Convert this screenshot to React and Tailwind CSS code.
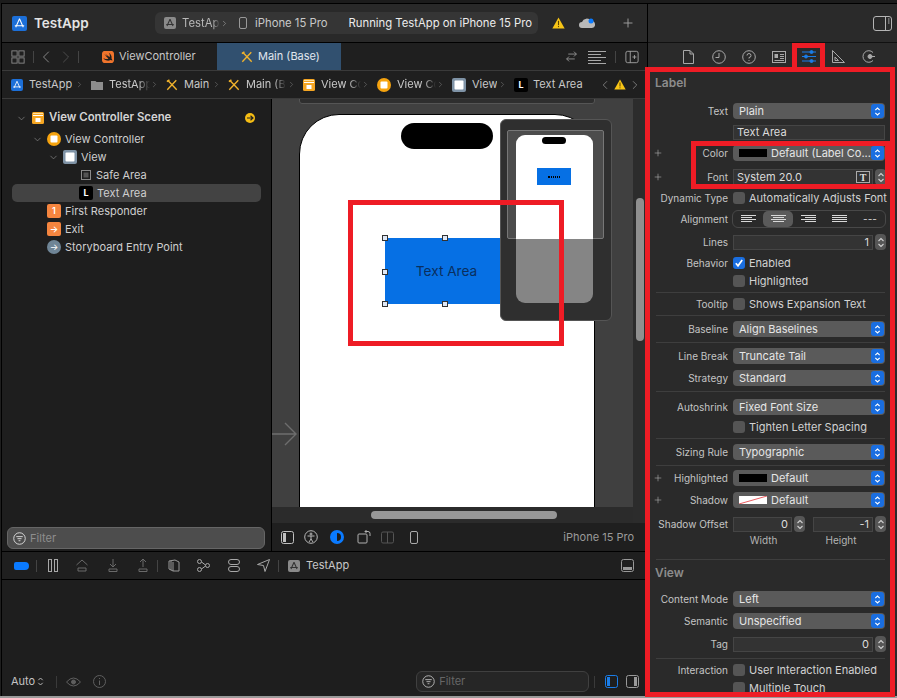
import React from "react";
import { SiSwift } from "react-icons/si";
import { ChevronRight, ChevronLeft, ChevronDown, Plus } from "lucide-react";

const AppIcon = ({ c = "bg-[#1c6fd8]", s = "w-[15px] h-[15px]" }) => (
  <span className={`${s} ${c} rounded-[2px] shrink-0 flex items-center justify-center`}>
    <svg viewBox="0 0 16 16" className="w-full h-full" fill="none" stroke="#fff" strokeWidth="1.1">
      <path d="M8 3 L4 12 M8 3 L12 12 M3 10.5 H13" />
    </svg>
  </span>
);
const GrayApp = () => (
  <span className="w-[12px] h-[12px] rounded-[2px] bg-[#8a8a8a] shrink-0 flex items-center justify-center">
    <svg viewBox="0 0 16 16" className="w-full h-full" fill="none" stroke="#333" strokeWidth="1.4">
      <path d="M8 3 L4 12 M8 3 L12 12 M3 10 H13" />
    </svg>
  </span>
);
const XIcon = () => (
  <svg viewBox="0 0 14 14" className="w-[12px] h-[12px] shrink-0" fill="none" stroke="#f1b32c" strokeWidth="1.6">
    <path d="M2 1.5 L12.5 12.5 M12 1.5 L1.5 12.5" />
    <path d="M1 3 L4 1" stroke="#f1b32c" />
  </svg>
);
const SceneIcon = ({ s = "w-[12px] h-[12px]" }) => (
  <svg viewBox="0 0 12 12" className={`${s} shrink-0`}>
    <rect width="12" height="12" rx="1.5" fill="#f5a623" />
    <rect x="1" y="1" width="10" height="1" fill="#ffe0a0" />
    <rect x="1" y="3" width="10" height="1" fill="#fff" />
    <rect x="3.5" y="6" width="5" height="4" fill="#fff" />
  </svg>
);
const VCIcon = ({ s = "w-[14px] h-[14px]" }) => (
  <svg viewBox="0 0 14 14" className={`${s} shrink-0`}>
    <circle cx="7" cy="7" r="7" fill="#f5a30f" />
    <rect x="3.5" y="3.5" width="7" height="7" rx="1" fill="#fff" />
  </svg>
);
const ViewIcon = () => (
  <svg viewBox="0 0 14 14" className="w-[14px] h-[14px] shrink-0">
    <rect width="14" height="14" rx="2" fill="#7f93a6" />
    <rect x="2.5" y="2.5" width="9" height="9" rx="1" fill="#fff" />
  </svg>
);
const LIcon = () => (
  <span className="w-[14px] h-[14px] rounded-[2px] bg-black text-white text-[9px] font-bold flex items-center justify-center shrink-0">L</span>
);
const Warn = ({ s = "w-[12px] h-[11px]" }) => (
  <svg viewBox="0 0 12 11" className={`${s} shrink-0`}>
    <path d="M6 0.5 L11.7 10.5 H0.3 Z" fill="#f8c516" strokeLinejoin="round" />
    <rect x="5.5" y="3.5" width="1" height="4" fill="#5a4300" />
    <rect x="5.5" y="8.3" width="1" height="1" fill="#5a4300" />
  </svg>
);
const ThinChev = () => <ChevronRight className="w-[9px] h-[11px] text-[#777] shrink-0" strokeWidth={1.5} />;

const IconSvg = ({ className = "", children, w = 16, h = 16 }) => (
  <svg viewBox={`0 0 ${w} ${h}`} className={`shrink-0 ${className}`} fill="none" stroke="currentColor" strokeWidth="1">
    {children}
  </svg>
);

const PathItem = ({ w, icon, text, fade, tw }) => (
  <div className={`flex items-center shrink-0 ${w}`}>
    {icon}
    <span className={`ml-[6px] whitespace-nowrap overflow-hidden ${tw} ${fade ? "[mask-image:linear-gradient(to_right,#000_70%,transparent)]" : ""}`}>{text}</span>
    <span className="ml-auto mr-[7px]"><ThinChev /></span>
  </div>
);

const Stepper = () => (
  <span className="w-[13px] h-[14px] mr-[1px] rounded-[3px] bg-[#1a6ee0] flex flex-col items-center justify-center shrink-0 text-white">
    <svg viewBox="0 0 8 12" className="w-[7px] h-[11px]" fill="none" stroke="currentColor" strokeWidth="1.3">
      <path d="M1.5 4.5 L4 2 L6.5 4.5 M1.5 7.5 L4 10 L6.5 7.5" />
    </svg>
  </span>
);
const Popup = ({ text, swatch, shadow }) => (
  <div className="w-[152px] h-[16px] rounded-[4px] bg-[#5a5a5a] flex items-center text-[#e6e6e6]">
    {swatch && <span className="ml-[6px] w-[28px] h-[8px] bg-black shrink-0" />}
    {shadow && (
      <svg viewBox="0 0 28 8" className="ml-[6px] w-[28px] h-[8px] shrink-0">
        <rect width="28" height="8" fill="#fff" />
        <path d="M0 8 L28 0" stroke="#e6333a" strokeWidth="0.8" />
      </svg>
    )}
    <span className={`flex-1 whitespace-nowrap ${swatch || shadow ? "ml-[4px]" : "ml-[6px]"}`}>{text}</span>
    <Stepper />
  </div>
);
const MiniStep = () => (
  <span className="w-[11px] h-[16px] rounded-[4px] bg-[#565656] flex items-center justify-center shrink-0 text-[#d0d0d0]">
    <svg viewBox="0 0 8 12" className="w-[8px] h-[13px]" fill="none" stroke="currentColor" strokeWidth="1.1">
      <path d="M1.5 4.5 L4 2 L6.5 4.5 M1.5 7.5 L4 10 L6.5 7.5" />
    </svg>
  </span>
);
const Field = ({ value, w = "w-[140px]", right }) => (
  <div className={`${w} h-[15px] bg-[#333333] border border-[#454545] flex items-center shrink-0 ${right ? "justify-end pr-[3px]" : "pl-[3px]"} text-[#dcdcdc]`}>{value}</div>
);
const Check = ({ on }) => (
  <span className={`w-[12px] h-[12px] rounded-[3px] shrink-0 flex items-center justify-center ${on ? "bg-[#1a6ee0]" : "bg-[#555555]"}`}>
    {on && (
      <svg viewBox="0 0 12 12" className="w-[12px] h-[12px]" fill="none" stroke="#fff" strokeWidth="1.7">
        <path d="M2.8 6.3 L5 8.8 L9.2 3" />
      </svg>
    )}
  </span>
);
const Row = ({ h, label, plus, children }) => (
  <div className={`flex items-center ${h}`}>
    <div className="w-[80px] pl-[5px] flex items-center justify-between shrink-0">
      {plus ? <Plus className="w-[10px] h-[10px] text-[#c0c0c0]" strokeWidth={1.3} /> : <span />}
      <span className="whitespace-nowrap text-[10px] text-[#c4c4c4]">{label}</span>
    </div>
    <div className="ml-[5px] flex items-center">{children}</div>
  </div>
);
const CheckRow = ({ h, label, text, on }) => (
  <Row h={h} label={label}>
    <Check on={on} />
    <span className="ml-[4px] whitespace-nowrap text-[#d2d2d2]">{text}</span>
  </Row>
);
const Div = ({ cls }) => <div className={`ml-[8px] w-[229px] h-px bg-[#3e3e3e] ${cls}`} />;

const AlignIcon = ({ kind }) => {
  const l = { l: [[0, 15], [0, 11], [0, 15], [0, 11]], c: [[0, 15], [2, 11], [0, 15], [2, 11]], r: [[0, 15], [4, 11], [0, 15], [4, 11]], j: [[0, 15], [0, 15], [0, 15], [0, 15]] }[kind];
  return (
    <svg viewBox="0 0 15 8" className="w-[15px] h-[8px]" stroke="#d8d8d8" strokeWidth="1">
      {l.map(([x, w], i) => <path key={i} d={`M${x} ${i * 2 + 0.5} h${w}`} />)}
    </svg>
  );
};

const Tree = ({ pl, icon, text, chev, sel }) => (
  <div className={`h-[18px] flex items-center rounded-[5px] mx-[10px] ${pl} ${sel ? "bg-[#434343]" : ""}`}>
    {chev && <ChevronDown className="w-[11px] h-[11px] text-[#8a8a8a] mr-[4px] -ml-[15px]" strokeWidth={1.5} />}
    {icon}
    <span className="ml-[4px] whitespace-nowrap text-[#cfcfcf]">{text}</span>
  </div>
);
const Orange = ({ children }) => (
  <span className="w-[14px] h-[14px] rounded-[2px] bg-[#f5853f] text-white text-[9px] font-semibold flex items-center justify-center shrink-0">{children}</span>
);
const FilterIcon = ({ c = "text-[#d8d8d8]" }) => (
  <IconSvg className={`w-[13px] h-[13px] ${c}`} w={14} h={14}>
    <circle cx="7" cy="7" r="6.2" />
    <path d="M3.5 5 H10.5 M4.8 7.2 H9.2 M6 9.4 H8" />
  </IconSvg>
);
const Handle = ({ cls }) => <span className={`absolute w-[6px] h-[6px] bg-[#dfe8f6] border border-[#333] ${cls}`} />;

export default function App() {
  return (
    <div className="relative w-[897px] h-[698px] overflow-hidden bg-[#1e1e1e] text-[11px] text-[#d0d0d0] [font-family:Inter,'Liberation_Sans',sans-serif]">
      <div className="h-[3px] bg-[#1c1c1c]" />
      <div className="h-[693px] ml-[1px] border-t border-black flex border-l border-l-black">
        {/* left column */}
        <div className="w-[646px] border-r border-black flex flex-col shrink-0">
          {/* toolbar */}
          <div className="h-[39px] bg-[#292929] border-b border-black flex items-center shrink-0">
            <span className="ml-[10px]"><AppIcon /></span>
            <span className="ml-[7px] w-[121px] shrink-0 text-[13.5px] font-semibold text-[#e4e4e4]">TestApp</span>
            <div className="w-[383px] h-[22px] rounded-[6px] bg-[#353535] flex items-center shrink-0 text-[11.3px]">
              <span className="ml-[9px]"><GrayApp /></span>
              <span className="ml-[6px] w-[38px] overflow-hidden whitespace-nowrap text-[#b8b8b8] [mask-image:linear-gradient(to_right,#000_80%,transparent)]">TestApp</span>
              <ChevronRight className="w-[9px] h-[11px] text-[#aaa]" strokeWidth={1.5} />
              <svg viewBox="0 0 8 12" className="ml-[10px] w-[8px] h-[12px] shrink-0" fill="none" stroke="#999" strokeWidth="1"><rect x="0.5" y="0.5" width="7" height="11" rx="1.5" /></svg>
              <span className="ml-[8px] whitespace-nowrap text-[#c8c8c8]">iPhone 15 Pro</span>
              <span className="ml-[21px] whitespace-nowrap text-[#ececec]">Running TestApp on iPhone 15 Pro</span>
            </div>
            <span className="ml-[14px]"><Warn s="w-[13px] h-[12px]" /></span>
            <span className="relative ml-[14px] w-[16px] h-[10px] shrink-0">
              <svg viewBox="0 0 16 10" className="w-[16px] h-[10px]"><path d="M3 10 a3 3 0 0 1 0 -6 a5 5 0 0 1 9 -1 a3.5 3.5 0 0 1 1 7 Z" fill="#b9b9b9" /><circle cx="12" cy="3" r="2.5" fill="#0a7aff" /></svg>
            </span>
            <Plus className="ml-[26px] w-[14px] h-[14px] text-[#a0a0a0]" strokeWidth={1.6} />
          </div>
          {/* tab bar */}
          <div className="h-[28px] bg-[#1f1f1f] flex items-center shrink-0 border-b border-[#3a3a3a] text-[#c8c8c8]">
            <IconSvg className="ml-[9px] w-[14px] h-[14px] text-[#8f8f8f]">
              <rect x="1" y="1" width="6" height="6" /><rect x="9" y="1" width="6" height="6" /><rect x="1" y="9" width="6" height="6" /><rect x="9" y="9" width="6" height="6" />
            </IconSvg>
            <span className="ml-[8px] w-px h-[12px] bg-[#444] shrink-0" />
            <ChevronLeft className="ml-[2px] w-[20px] h-[26px] text-[#999] shrink-0" strokeWidth={1} />
            <ChevronRight className="w-[20px] h-[26px] text-[#555] shrink-0" strokeWidth={1} />
            <span className="ml-[2px] w-px h-[12px] bg-[#444] shrink-0" />
            <div className="ml-[23px] w-[115px] flex items-center shrink-0">
              <SiSwift className="w-[12px] h-[12px] text-[#f0742c]" />
              <span className="ml-[5px] whitespace-nowrap">ViewController</span>
            </div>
            <div className="w-[124px] h-full bg-[#31506f] flex items-center pl-[24px] text-[#e0e6ee] shrink-0">
              <XIcon />
              <span className="ml-[5px] whitespace-nowrap">Main (Base)</span>
            </div>
            <IconSvg className="ml-[224px] w-[13px] h-[13px] text-[#a0a0a0]">
              <path d="M4 5 H14 M11 2 L14 5 L11 8 M12 11 H2 M5 8 L2 11 L5 14" />
            </IconSvg>
            <IconSvg className="ml-[10px] w-[18px] h-[14px] text-[#a8a8a8]" w={18} h={14}>
              <path d="M0 1.5 H18 M0 4.5 H13 M0 7.5 H18 M0 10.5 H13 M0 13.5 H18" />
            </IconSvg>
            <span className="ml-[9px] w-px h-[12px] bg-[#444] shrink-0" />
            <IconSvg className="ml-[9px] w-[14px] h-[14px] text-[#a8a8a8]">
              <rect x="1" y="1.5" width="14" height="13" rx="2" /><path d="M6 1.5 V14.5 M8.5 8 H13 M10.8 5.7 V10.3" />
            </IconSvg>
          </div>
          {/* path bar */}
          <div className="h-[28px] bg-[#1f1f1f] flex items-center shrink-0 border-b border-[#3a3a3a] pl-[9px] text-[#c8c8c8]">
            <PathItem w="w-[80px]" icon={<AppIcon s="w-[12px] h-[12px]" />} text="TestApp" />
            <PathItem w="w-[75px]" fade tw="w-[42px]" icon={<svg viewBox="0 0 12 10" className="w-[12px] h-[10px] shrink-0"><path d="M0 1 H4.5 L5.5 2 H12 V10 H0 Z" fill="#8d8d8d" /></svg>} text="TestApp" />
            <PathItem w="w-[62px]" icon={<XIcon />} text="Main" />
            <PathItem w="w-[75px]" fade tw="w-[40px]" icon={<XIcon />} text="Main (Base)" />
            <PathItem w="w-[74px]" fade tw="w-[40px]" icon={<SceneIcon />} text="View Controller" />
            <PathItem w="w-[75px]" fade tw="w-[39px]" icon={<VCIcon />} text="View Controller" />
            <PathItem w="w-[62px]" icon={<ViewIcon />} text="View" />
            <div className="flex items-center w-[70px] shrink-0">
              <LIcon />
              <span className="ml-[5px] whitespace-nowrap">Text Area</span>
            </div>
            <ChevronLeft className="ml-[14px] w-[14px] h-[18px] text-[#999] shrink-0" strokeWidth={1.2} />
            <span className="ml-[2px]"><Warn /></span>
            <ChevronRight className="ml-[2px] w-[14px] h-[18px] text-[#999] shrink-0" strokeWidth={1.2} />
          </div>
          {/* middle */}
          <div className="h-[453px] flex shrink-0 border-b border-black">
            {/* navigator */}
            <div className="w-[270px] bg-[#1e1e1e] border-r border-black flex flex-col shrink-0">
              <div className="h-[8px]" />
              <div className="h-[22px] flex items-center mx-[10px] pl-[22px]">
                <ChevronDown className="w-[11px] h-[11px] text-[#8a8a8a] mr-[5px] -ml-[18px]" strokeWidth={1.5} />
                <SceneIcon />
                <span className="ml-[5px] font-semibold text-[11.4px] text-[#d4d4d4] whitespace-nowrap">View Controller Scene</span>
                <span className="ml-auto mr-[6px] w-[10px] h-[10px] rounded-full bg-[#f5bd14] flex items-center justify-center">
                  <svg viewBox="0 0 10 10" className="w-[10px] h-[10px]" fill="none" stroke="#222" strokeWidth="1.2"><path d="M2 5 H8 M5.5 2.8 L8 5 L5.5 7.2" /></svg>
                </span>
              </div>
              <div className="h-[1px]" />
              <Tree pl="pl-[35px]" chev icon={<VCIcon />} text="View Controller" />
              <Tree pl="pl-[51px]" chev icon={<ViewIcon />} text="View" />
              <Tree pl="pl-[69px]" icon={<svg viewBox="0 0 10 10" className="w-[10px] h-[10px] shrink-0 mr-[1px]" fill="none" stroke="#8a8a8a"><rect x="0.5" y="0.5" width="9" height="9" /><rect x="2.5" y="2.5" width="5" height="5" fill="#555" stroke="none" /></svg>} text="Safe Area" />
              <Tree pl="pl-[67px]" sel icon={<LIcon />} text="Text Area" />
              <Tree pl="pl-[35px]" icon={<Orange>1</Orange>} text="First Responder" />
              <Tree pl="pl-[35px]" icon={<Orange>→</Orange>} text="Exit" />
              <Tree pl="pl-[35px]" icon={<span className="w-[14px] h-[14px] rounded-full bg-[#6f8596] text-white text-[9px] flex items-center justify-center shrink-0">→</span>} text="Storyboard Entry Point" />
              <div className="flex-1" />
              <div className="mx-[5px] mb-[2px] w-[258px] h-[22px] rounded-[6px] bg-[#4d4d4d] border border-[#666] flex items-center pl-[5px]">
                <FilterIcon c="text-[#e0e0e0]" />
                <span className="ml-[4px] text-[#8e8e8e]">Filter</span>
              </div>
            </div>
            {/* canvas column */}
            <div className="flex-1 flex flex-col">
              <div className="h-[424px] flex shrink-0">
                <div className="flex-1 flex flex-col">
                  <div className="relative h-[408px] overflow-hidden bg-[#404040] shrink-0">
                    <div className="absolute left-[27px] -top-[10px] w-[296px] h-[15px] bg-[#2e2e2e] border border-[#555] rounded-[3px]" />
                    <div className="absolute left-[27px] top-[15px] w-[296px] h-[430px] bg-white border border-black rounded-t-[40px]">
                      <div className="absolute left-[101px] top-[8px] w-[92px] h-[26px] rounded-full bg-black" />
                    </div>
                    <div className="absolute left-[113px] top-[139px] w-[130px] h-[66px] bg-[#0670e4] flex items-center justify-center">
                      <span className="ml-[-7px] text-[13.6px] text-[#0a2f5e]">Text Area</span>
                    </div>
                    <Handle cls="left-[110px] top-[136px]" />
                    <Handle cls="left-[170px] top-[136px]" />
                    <Handle cls="left-[110px] top-[170px]" />
                    <Handle cls="left-[110px] top-[202px]" />
                    <Handle cls="left-[170px] top-[202px]" />
                    <svg viewBox="0 0 26 26" className="absolute left-0 top-[322px] w-[26px] h-[26px]" fill="none" stroke="#6d6d6d" strokeWidth="1.4">
                      <path d="M0 13 H24 M13 2 L24 13 L13 24" />
                    </svg>
                    {/* minimap */}
                    <div className="absolute left-[228px] top-[20px] w-[112px] h-[202px] rounded-[6px] bg-[#2f2f2f] border border-[#555]">
                      <div className="absolute left-[6px] top-[10px] w-[97px] h-[109px] bg-[#4c4c4c] border border-[#777] rounded-[2px]" />
                      <div className="absolute left-[15px] top-[15px] w-[77px] h-[168px] rounded-[9px] overflow-hidden bg-[#858585]">
                        <div className="h-[104px] bg-white" />
                      </div>
                      <div className="absolute left-[41px] top-[17px] w-[24px] h-[7px] rounded-full bg-black" />
                      <div className="absolute left-[36px] top-[48px] w-[34px] h-[17px] bg-[#0670e4] flex items-center justify-center">
                        <span className="w-[12px] h-[2px] border-y border-dotted border-black" />
                      </div>
                    </div>
                  </div>
                  <div className="h-[16px] bg-[#2b2b2b] relative shrink-0">
                    <div className="absolute left-[99px] top-[4px] w-[186px] h-[8px] rounded-full bg-[#979797]" />
                  </div>
                </div>
                <div className="w-[14px] bg-[#2c2c2c] relative shrink-0">
                  <div className="absolute left-[3px] top-[99px] w-[8px] h-[143px] rounded-full bg-[#8f8f8f]" />
                </div>
              </div>
              <div className="flex-1 bg-[#1f1f1f] flex items-center pl-[9px] text-[#8a8a8a]">
                <IconSvg className="w-[13px] h-[13px] text-[#c0c0c0]" w={13} h={13}><rect x="0.5" y="0.5" width="12" height="12" rx="2" /><rect x="2" y="2" width="3" height="9" fill="currentColor" stroke="none" /></IconSvg>
                <IconSvg className="ml-[10px] w-[14px] h-[14px] text-[#b8b8b8]" w={14} h={14}><circle cx="7" cy="7" r="6.3" /><circle cx="7" cy="4" r="1" /><path d="M3.5 6 H10.5 M7 6 V9 L5 12 M7 9 L9 12" /></IconSvg>
                <svg viewBox="0 0 14 14" className="ml-[12px] w-[14px] h-[14px] shrink-0"><circle cx="7" cy="7" r="7" fill="#0a7aff" /><path d="M7 3 A4 4 0 0 1 7 11 Z" fill="#1c1c1c" /></svg>
                <IconSvg className="ml-[13px] w-[14px] h-[14px] text-[#b0b0b0]" w={14} h={14}><rect x="1" y="4" width="9" height="9" rx="1" /><path d="M8 1.5 H11 A2 2 0 0 1 13 3.5 V6 M9.5 0 L8 1.5 L9.5 3" /></IconSvg>
                <IconSvg className="ml-[10px] w-[13px] h-[13px] text-[#555]" w={13} h={13}><rect x="0.5" y="1" width="12" height="11" rx="1.5" /><path d="M6.5 1 V12" /></IconSvg>
                <IconSvg className="ml-[16px] w-[8px] h-[13px] text-[#aaa]" w={8} h={13}><rect x="0.5" y="0.5" width="7" height="12" rx="1.5" /></IconSvg>
                <span className="ml-auto mr-[13px] text-[#9a9a9a] whitespace-nowrap">iPhone 15 Pro</span>
              </div>
            </div>
          </div>
          {/* debug bar */}
          <div className="h-[28px] bg-[#1f1f1f] border-b border-black flex items-center shrink-0 text-[#888]">
            <span className="ml-[12px] w-[15px] h-[8px] bg-[#0a7aff] rounded-l-[2px] rounded-r-[4px] shrink-0" />
            <span className="ml-[7px] w-px h-[12px] bg-[#444] shrink-0" />
            <IconSvg className="ml-[11px] w-[10px] h-[13px] text-[#a8a8a8]" w={10} h={13}><rect x="0.5" y="0.5" width="3" height="12" /><rect x="6.5" y="0.5" width="3" height="12" /></IconSvg>
            <IconSvg className="ml-[18px] w-[12px] h-[13px] text-[#6a6a6a]" w={12} h={13}><path d="M0.5 6 L6 1 L11.5 6 M2 9 H10 V12 H2 Z" /></IconSvg>
            <IconSvg className="ml-[20px] w-[10px] h-[13px] text-[#6a6a6a]" w={10} h={13}><path d="M5 0 V8 M2 5 L5 8 L8 5 M1 10 H9 V12.5 H1 Z" /></IconSvg>
            <IconSvg className="ml-[20px] w-[10px] h-[13px] text-[#6a6a6a]" w={10} h={13}><path d="M5 8 V0 M2 3 L5 0 L8 3 M1 10 H9 V12.5 H1 Z" /></IconSvg>
            <span className="ml-[9px] w-px h-[12px] bg-[#444] shrink-0" />
            <IconSvg className="ml-[10px] w-[12px] h-[13px] text-[#999]" w={12} h={13}><path d="M1 2 L7 1 L11 3 V12 L5 12 L1 10 Z M5 3 V12 M3 2 V11" /></IconSvg>
            <IconSvg className="ml-[17px] w-[13px] h-[13px] text-[#a8a8a8]" w={13} h={13}><circle cx="2.5" cy="2.5" r="2" /><circle cx="2.5" cy="10.5" r="2" /><circle cx="10.5" cy="6.5" r="2" /><path d="M4.5 3 L8.5 6 M4.5 10 L8.5 7" /></IconSvg>
            <IconSvg className="ml-[18px] w-[12px] h-[13px] text-[#a8a8a8]" w={12} h={13}><rect x="0.5" y="0.5" width="11" height="5" rx="2.5" /><rect x="0.5" y="7.5" width="11" height="5" rx="2.5" /></IconSvg>
            <IconSvg className="ml-[17px] w-[13px] h-[13px] text-[#a8a8a8]" w={13} h={13}><path d="M12.5 0.5 L0.5 5.5 L6.5 6.5 L8 12.5 Z" /></IconSvg>
            <span className="ml-[8px] w-px h-[12px] bg-[#444] shrink-0" />
            <span className="ml-[9px]"><GrayApp /></span>
            <span className="ml-[6px] text-[#c8c8c8]">TestApp</span>
            <IconSvg className="ml-auto mr-[13px] w-[13px] h-[13px] text-[#999]" w={13} h={13}><rect x="0.5" y="0.5" width="12" height="12" rx="2" /><rect x="2" y="8" width="9" height="3" fill="currentColor" stroke="none" /></IconSvg>
          </div>
          {/* console */}
          <div className="flex-1 bg-[#1e1e1e] flex items-end pb-[4px]">
            <div className="h-[21px] flex items-center w-full">
              <span className="ml-[9px] text-[#c4c4c4]">Auto</span>
              <svg viewBox="0 0 8 12" className="ml-[2px] w-[7px] h-[11px]" fill="none" stroke="#bbb" strokeWidth="1.1"><path d="M1.5 4.5 L4 2 L6.5 4.5 M1.5 7.5 L4 10 L6.5 7.5" /></svg>
              <span className="ml-[12px] w-px h-[12px] bg-[#3a3a3a] shrink-0" />
              <IconSvg className="ml-[9px] w-[15px] h-[12px] text-[#5f5f5f]" w={15} h={12}><path d="M0.5 6 Q7.5 -2 14.5 6 Q7.5 14 0.5 6 Z" /><circle cx="7.5" cy="6" r="2" fill="currentColor" /></IconSvg>
              <IconSvg className="ml-[12px] w-[13px] h-[13px] text-[#5f5f5f]" w={13} h={13}><circle cx="6.5" cy="6.5" r="6" /><path d="M6.5 5.5 V10 M6.5 3 V4" /></IconSvg>
              <div className="ml-[310px] w-[173px] h-[21px] rounded-[6px] bg-[#262626] border border-[#404040] flex items-center pl-[5px] shrink-0">
                <FilterIcon c="text-[#bbb]" />
                <span className="ml-[4px] text-[#666]">Filter</span>
              </div>
              <span className="ml-[5px] w-px h-[12px] bg-[#3a3a3a] shrink-0" />
              <IconSvg className="ml-[10px] w-[13px] h-[13px] text-[#1a7de8]" w={13} h={13}><rect x="0.5" y="0.5" width="12" height="12" rx="2" /><rect x="2" y="2" width="3" height="9" fill="currentColor" stroke="none" /></IconSvg>
              <IconSvg className="ml-[8px] w-[13px] h-[13px] text-[#999]" w={13} h={13}><rect x="0.5" y="0.5" width="12" height="12" rx="2" /><rect x="8" y="2" width="3" height="9" fill="currentColor" stroke="none" /></IconSvg>
            </div>
          </div>
        </div>
        {/* inspector */}
        <div className="flex-1 min-w-0 bg-[#2a2a2a] flex flex-col overflow-hidden">
          <div className="h-[39px] border-b border-[#111] flex items-center justify-end shrink-0">
            <IconSvg className="mr-[5px] w-[19px] h-[15px] text-[#b5b5b5]" w={19} h={15}><rect x="0.5" y="0.5" width="18" height="14" rx="2.5" /><path d="M12.5 0.5 V14.5" /><path d="M15 3 H16.5 M15 5 H16.5 M15 7 H16.5" /></IconSvg>
          </div>
          <div className="h-[27px] flex items-center shrink-0 pl-[35px] text-[#a8a8a8]">
            <IconSvg className="w-[11px] h-[14px]" w={11} h={14}><path d="M0.5 0.5 H7 L10.5 4 V13.5 H0.5 Z M7 0.5 V4 H10.5" /></IconSvg>
            <IconSvg className="ml-[18px] w-[14px] h-[14px]" w={14} h={14}><circle cx="7" cy="7" r="6.3" /><path d="M7 3 V7.5 H3.5" /></IconSvg>
            <IconSvg className="ml-[16px] w-[14px] h-[14px]" w={14} h={14}><circle cx="7" cy="7" r="6.3" /><path d="M5 5.5 A2 2 0 1 1 7 7.5 V8.5 M7 10 V11" /></IconSvg>
            <IconSvg className="ml-[16px] w-[14px] h-[12px]" w={14} h={12}><rect x="0.5" y="0.5" width="13" height="11" /><rect x="2.5" y="3" width="3.5" height="4" fill="currentColor" stroke="none" /><path d="M8 3.5 H12 M8 5.5 H12 M8 7.5 H12 M2.5 9.5 H12" /></IconSvg>
            <IconSvg className="ml-[16px] w-[14px] h-[13px] text-[#1a7de8]" w={14} h={13}><path d="M0 2 H14 M0 6.5 H14 M0 11 H14" /><circle cx="9.5" cy="2" r="1.5" fill="currentColor" /><circle cx="4" cy="6.5" r="1.5" fill="currentColor" /><circle cx="9.5" cy="11" r="1.5" fill="currentColor" /></IconSvg>
            <IconSvg className="ml-[16px] w-[13px] h-[13px]" w={13} h={13}><path d="M0.5 0.5 L12.5 12.5 H0.5 Z M3 7 L6.5 10.5 H3 Z" /></IconSvg>
            <IconSvg className="ml-[17px] w-[13px] h-[13px]" w={13} h={13}><path d="M11 2.5 A5.8 5.8 0 1 0 11 10.5" /><circle cx="8" cy="6.5" r="2" fill="currentColor" /><path d="M8 6.5 H13" /></IconSvg>
          </div>
          <div className="flex-1 overflow-hidden">
            <div className="h-[2px]" />
            <div className="h-[22px] pl-[7px] flex items-center text-[12px] font-semibold text-[#8c8c8c]">Label</div>
            <div className="h-[6px]" />
            <Row h="h-[22px]" label="Text"><Popup text="Plain" /></Row>
            <div className="h-[20px] flex items-center pl-[85px]"><Field w="w-[152px]" value="Text Area" /></div>
            <Row h="h-[22px]" label="Color" plus><Popup swatch text="Default (Label Co..." /></Row>
            <Row h="h-[26px]" label="Font" plus>
              <div className="w-[140px] h-[16px] bg-[#333333] border border-[#454545] flex items-center pl-[3px] text-[#dcdcdc] shrink-0">
                <span className="flex-1">System 20.0</span>
                <span className="mr-[2px] w-[14px] h-[12px] border border-[#aaa] flex items-center justify-center text-[10px] font-bold [font-family:'Liberation_Serif',serif] text-[#ddd] shrink-0">T</span>
              </div>
              <span className="ml-[2px]"><MiniStep /></span>
            </Row>
            <CheckRow h="h-[16px]" label="Dynamic Type" text="Automatically Adjusts Font" />
            <Row h="h-[26px]" label="Alignment">
              <div className="w-[154px] -ml-[1px] h-[18px] rounded-[6px] border border-[#484848] flex items-center">
                <span className="w-[30px] flex justify-center"><AlignIcon kind="l" /></span>
                <span className="w-[30px] h-full bg-[#5a5a5a] rounded-[5px] flex items-center justify-center"><AlignIcon kind="c" /></span>
                <span className="w-[31px] flex justify-center"><AlignIcon kind="r" /></span>
                <span className="w-[31px] flex justify-center"><AlignIcon kind="j" /></span>
                <span className="w-[30px] text-center text-[10px] leading-none text-[#d8d8d8]">---</span>
              </div>
            </Row>
            <Row h="h-[20px]" label="Lines"><Field value="1" right /><span className="ml-[2px]"><MiniStep /></span></Row>
            <CheckRow h="h-[22px]" label="Behavior" text="Enabled" on />
            <CheckRow h="h-[14px]" label="" text="Highlighted" />
            <Div cls="mt-[4px] mb-[3px]" />
            <CheckRow h="h-[16px]" label="Tooltip" text="Shows Expansion Text" />
            <Div cls="mt-[3px] mb-[2px]" />
            <Row h="h-[22px]" label="Baseline"><Popup text="Align Baselines" /></Row>
            <Div cls="mt-[2px] mb-[2px]" />
            <Row h="h-[22px]" label="Line Break"><Popup text="Truncate Tail" /></Row>
            <Row h="h-[22px]" label="Strategy"><Popup text="Standard" /></Row>
            <Div cls="mt-[2px] mb-[4px]" />
            <Row h="h-[22px]" label="Autoshrink"><Popup text="Fixed Font Size" /></Row>
            <CheckRow h="h-[18px]" label="" text="Tighten Letter Spacing" />
            <Div cls="mt-[2px] mb-[2px]" />
            <Row h="h-[22px]" label="Sizing Rule"><Popup text="Typographic" /></Row>
            <Div cls="mt-[2px] mb-[1px]" />
            <Row h="h-[22px]" label="Highlighted" plus><Popup swatch text="Default" /></Row>
            <Row h="h-[22px]" label="Shadow" plus><Popup shadow text="Default" /></Row>
            <div className="h-[3px]" />
            <Row h="h-[20px]" label="Shadow Offset">
              <Field w="w-[59px]" value="0" right />
              <span className="ml-[2px]"><MiniStep /></span>
              <span className="ml-[8px]"><Field w="w-[60px]" value="-1" right /></span>
              <span className="ml-[2px]"><MiniStep /></span>
            </Row>
            <div className="h-[12px] flex items-center text-[10px] text-[#b4b4b4]">
              <span className="ml-[86px] w-[59px] text-center">Width</span>
              <span className="ml-[18px] w-[60px] text-center">Height</span>
            </div>
            <Div cls="mt-[13px] mb-[2px]" />
            <div className="h-[22px] pl-[7px] flex items-center text-[12px] font-semibold text-[#8c8c8c]">View</div>
            <div className="h-[4px]" />
            <Row h="h-[22px]" label="Content Mode"><Popup text="Left" /></Row>
            <Row h="h-[22px]" label="Semantic"><Popup text="Unspecified" /></Row>
            <div className="h-[1px]" />
            <Row h="h-[22px]" label="Tag"><Field value="0" right /><span className="ml-[2px]"><MiniStep /></span></Row>
            <Div cls="mt-[3px] mb-[2px]" />
            <CheckRow h="h-[18px]" label="Interaction" text="User Interaction Enabled" />
            <CheckRow h="h-[18px]" label="" text="Multiple Touch" />
          </div>
        </div>
      </div>
      <div className="h-[2px] bg-[#9a9a9a]" />
      {/* red annotation rectangles */}
      <div className="absolute left-[645px] top-[67px] w-[250px] h-[630px] border-[5px] border-[#ee1c25]" />
      <div className="absolute left-[792px] top-[43px] w-[33px] h-[26px] border-[5px] border-b-0 border-[#ee1c25]" />
      <div className="absolute left-[691px] top-[141px] w-[199px] h-[48px] border-[5px] border-[#ee1c25]" />
      <div className="absolute left-[348px] top-[200px] w-[216px] h-[146px] border-[5px] border-[#ee1c25]" />
    </div>
  );
}
